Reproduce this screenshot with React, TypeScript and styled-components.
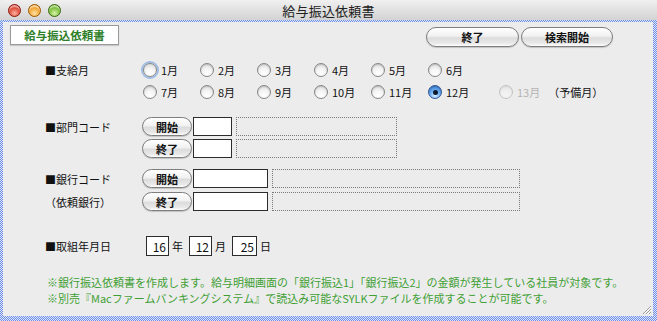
import React from "react";
import styled, { createGlobalStyle, css } from "styled-components";

const GlobalStyle = createGlobalStyle`
  html, body { margin: 0; padding: 0; background: #ffffff; }
  body { font-family: "Noto Sans CJK JP", "Noto Sans", sans-serif; }
`;

const Window = styled.div`
  width: 657px;
  height: 321px;
  display: flex;
  flex-direction: column;
  overflow: hidden;
  background: #ececec;
`;

const TitleBar = styled.div`
  height: 20px;
  flex: none;
  display: grid;
  grid-template-columns: 1fr auto 1fr;
  align-items: center;
  background: linear-gradient(#f0f0f0, #d3d3d3);
  border-radius: 5px 5px 0 0;
`;

const Lights = styled.div`
  display: flex;
  gap: 7px;
  padding-left: 8px;
`;

const lightColors = {
  red: ["#ffb0a0", "#d8412f", "#8a1c12"],
  amber: ["#ffe0a0", "#f0a02a", "#9a5a08"],
  green: ["#d8f5a8", "#74b832", "#3d6b14"],
};

const Light = styled.span<{ $c: keyof typeof lightColors }>`
  width: 13px;
  height: 13px;
  border-radius: 50%;
  box-sizing: border-box;
  border: 1px solid ${(p) => lightColors[p.$c][2]};
  background: radial-gradient(circle at 50% 75%, ${(p) => lightColors[p.$c][0]} 0%, ${(p) => lightColors[p.$c][1]} 60%),
    ${(p) => lightColors[p.$c][1]};
  box-shadow: inset 0 2px 1px rgba(255, 255, 255, 0.55);
`;

const Title = styled.div`
  font-size: 13px;
  color: #202020;
  letter-spacing: 0.2px;
`;

const Frame = styled.div`
  flex: 1;
  display: flex;
  min-width: 0;
  padding: 2px 4px 5px 3px;
  background-color: #e3e9fb;
  background-image: repeating-conic-gradient(#6c8ee6 0% 25%, #dfe6fb 0% 50%);
  background-size: 2px 2px;
`;

const Content = styled.div`
  flex: 1;
  min-width: 0;
  position: relative;
  display: flex;
  flex-direction: column;
  padding: 3px 0 0 7px;
  background: #ececec;
  overflow: hidden;
`;

const TopRow = styled.div`
  display: flex;
  justify-content: space-between;
  align-items: flex-start;
  height: 22px;
`;

const TabLabel = styled.div`
  width: 107px;
  height: 18px;
  display: flex;
  align-items: center;
  justify-content: center;
  background: #ffffff;
  border: 1px solid #9a9a9a;
  box-shadow: 0 1px 1px rgba(0, 0, 0, 0.15);
  color: #2f7f2a;
  font-size: 11.5px;
  font-weight: 700;
`;

const ButtonGroup = styled.div`
  display: flex;
  gap: 2px;
  margin: 2px 40px 0 0;
`;

const PillButton = styled.button<{ $w: number; $h?: number }>`
  width: ${(p) => p.$w}px;
  height: ${(p) => p.$h ?? 20}px;
  padding: 0;
  border: 1px solid #7e7e7e;
  border-radius: 10px;
  background: linear-gradient(#ffffff 0%, #f1f1f1 45%, #dcdcdc 55%, #e9e9e9 85%, #ffffff 100%);
  box-shadow: 0 1px 1px rgba(0, 0, 0, 0.18);
  font-family: inherit;
  font-size: 11px;
  font-weight: 700;
  color: #111;
  display: flex;
  align-items: center;
  justify-content: center;
  flex: none;
`;

const Form = styled.div`
  display: flex;
  flex-direction: column;
  margin-left: 35px;
`;

const Section = styled.div<{ $top: number; $row: number; $gap?: number }>`
  display: grid;
  grid-template-columns: 97px 1fr;
  grid-auto-rows: ${(p) => p.$row}px;
  row-gap: ${(p) => p.$gap ?? 0}px;
  align-items: center;
  margin-top: ${(p) => p.$top}px;
`;

const Label = styled.div`
  font-size: 11px;
  color: #111;
  white-space: nowrap;
`;

const RadioRow = styled.div`
  display: grid;
  grid-template-columns: repeat(6, 57px) auto;
  align-items: center;
  margin-left: 1px;
`;

const RadioItem = styled.label<{ $disabled?: boolean; $extra?: number }>`
  display: flex;
  align-items: center;
  gap: 4px;
  font-size: 11px;
  color: ${(p) => (p.$disabled ? "#b4b4b4" : "#111")};
  margin-left: ${(p) => p.$extra ?? 0}px;
  white-space: nowrap;
`;

const RadioDot = styled.span<{ $checked?: boolean; $focus?: boolean; $disabled?: boolean }>`
  width: 14px;
  height: 14px;
  flex: none;
  box-sizing: border-box;
  border-radius: 50%;
  border: 1px solid #868686;
  background: radial-gradient(circle at 50% 80%, #ffffff 0%, #f4f4f4 45%, #d2d2d2 100%);
  box-shadow: inset 0 1px 1px rgba(0, 0, 0, 0.15);
  display: flex;
  align-items: center;
  justify-content: center;
  ${(p) =>
    p.$checked &&
    css`
      border-color: #2f5592;
      background: radial-gradient(circle at 50% 80%, #d8f0ff 0%, #6aaef0 45%, #2d6cc8 100%);
      &::after {
        content: "";
        width: 5px;
        height: 5px;
        border-radius: 50%;
        background: #0c1a30;
      }
    `}
  ${(p) =>
    p.$focus &&
    css`
      box-shadow: 0 0 0 2px rgba(120, 165, 225, 0.65);
    `}
  ${(p) =>
    p.$disabled &&
    css`
      opacity: 0.4;
    `}
`;

const Note = styled.span`
  font-size: 11px;
  margin-left: 4px;
  color: #111;
`;

const ControlRow = styled.div`
  display: flex;
  align-items: center;
  height: 100%;
`;

const TextBox = styled.div<{ $w: number }>`
  width: ${(p) => p.$w}px;
  height: 19px;
  box-sizing: border-box;
  background: #ffffff;
  border: 1px solid #2c2c2c;
  margin-left: 1px;
  flex: none;
`;

const ShadowBox = styled.div<{ $w: number }>`
  width: ${(p) => p.$w}px;
  height: 19px;
  box-sizing: border-box;
  border: 1px dotted #7a7a7a;
  margin-left: 4px;
  flex: none;
`;

const DateRow = styled.div`
  display: flex;
  align-items: center;
  margin-left: 4px;
  font-size: 11px;
  color: #111;
`;

const DateBox = styled.div<{ $w: number }>`
  width: ${(p) => p.$w}px;
  height: 20px;
  box-sizing: border-box;
  background: #ffffff;
  border: 1px solid #2c2c2c;
  display: flex;
  align-items: center;
  justify-content: flex-end;
  padding-right: 2px;
  font-size: 12px;
`;

const DateUnit = styled.span<{ $after: number }>`
  margin: 0 ${(p) => p.$after}px 0 3px;
`;

const Notes = styled.div`
  margin: 18px 0 0 2px;
  color: #3f9f34;
  font-size: 11px;
  line-height: 16px;
  white-space: nowrap;
`;

const Grip = styled.svg`
  position: absolute;
  right: 1px;
  bottom: 1px;
`;

const monthsTop = ["1月", "2月", "3月", "4月", "5月", "6月"];
const monthsBottom = ["7月", "8月", "9月", "10月", "11月", "12月"];

export default function App() {
  return (
    <>
      <GlobalStyle />
      <Window>
        <TitleBar>
          <Lights>
            <Light $c="red" />
            <Light $c="amber" />
            <Light $c="green" />
          </Lights>
          <Title>給与振込依頼書</Title>
          <div />
        </TitleBar>
        <Frame>
          <Content>
            <TopRow>
              <TabLabel>給与振込依頼書</TabLabel>
              <ButtonGroup>
                <PillButton $w={93}>終了</PillButton>
                <PillButton $w={92}>検索開始</PillButton>
              </ButtonGroup>
            </TopRow>

            <Form>
              <Section $top={12} $row={22}>
                <Label>■支給月</Label>
                <RadioRow>
                  {monthsTop.map((m, i) => (
                    <RadioItem key={m}>
                      <RadioDot $focus={i === 0} />
                      {m}
                    </RadioItem>
                  ))}
                </RadioRow>
                <span />
                <RadioRow>
                  {monthsBottom.map((m) => (
                    <RadioItem key={m}>
                      <RadioDot $checked={m === "12月"} />
                      {m}
                    </RadioItem>
                  ))}
                  <RadioItem $disabled $extra={14}>
                    <RadioDot $disabled />
                    13月
                    <Note>（予備月）</Note>
                  </RadioItem>
                </RadioRow>
              </Section>

              <Section $top={14} $row={19} $gap={3}>
                <Label>■部門コード</Label>
                <ControlRow>
                  <PillButton $w={50} $h={19}>開始</PillButton>
                  <TextBox $w={39} />
                  <ShadowBox $w={161} />
                </ControlRow>
                <span />
                <ControlRow>
                  <PillButton $w={50} $h={19}>終了</PillButton>
                  <TextBox $w={39} />
                  <ShadowBox $w={161} />
                </ControlRow>
              </Section>

              <Section $top={11} $row={19} $gap={4}>
                <Label>■銀行コード</Label>
                <ControlRow>
                  <PillButton $w={50} $h={19}>開始</PillButton>
                  <TextBox $w={75} />
                  <ShadowBox $w={248} />
                </ControlRow>
                <Label>（依頼銀行）</Label>
                <ControlRow>
                  <PillButton $w={50} $h={19}>終了</PillButton>
                  <TextBox $w={75} />
                  <ShadowBox $w={248} />
                </ControlRow>
              </Section>

              <Section $top={25} $row={20}>
                <Label>■取組年月日</Label>
                <DateRow>
                  <DateBox $w={23}>16</DateBox>
                  <DateUnit $after={6}>年</DateUnit>
                  <DateBox $w={23}>12</DateBox>
                  <DateUnit $after={6}>月</DateUnit>
                  <DateBox $w={25}>25</DateBox>
                  <DateUnit $after={0}>日</DateUnit>
                </DateRow>
              </Section>

              <Notes>
                <div>※銀行振込依頼書を作成します。給与明細画面の「銀行振込1」「銀行振込2」の金額が発生している社員が対象です。</div>
                <div>※別売『Macファームバンキングシステム』で読込み可能なSYLKファイルを作成することが可能です。</div>
              </Notes>
            </Form>

            <Grip width="11" height="11" viewBox="0 0 11 11">
              <path d="M10 2 L2 10 M10 5 L5 10 M10 8 L8 10" stroke="#9a9a9a" strokeWidth="1" />
              <path d="M10 3 L3 10 M10 6 L6 10 M10 9 L9 10" stroke="#ffffff" strokeWidth="1" />
            </Grip>
          </Content>
        </Frame>
      </Window>
    </>
  );
}
